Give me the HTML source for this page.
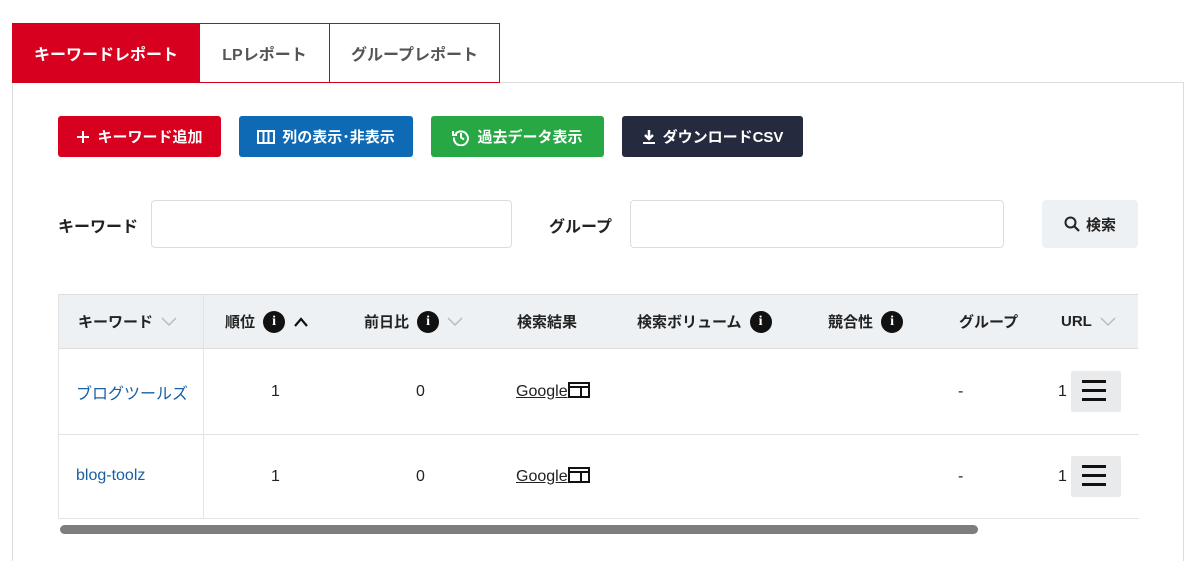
<!DOCTYPE html>
<html><head><meta charset="utf-8"><style>
*{box-sizing:border-box;margin:0;padding:0}
body{width:1200px;height:561px;background:#fff;font-family:"Liberation Sans","Noto Sans CJK JP",sans-serif;position:relative;overflow:hidden;color:#222}
.a{position:absolute}
.tab{position:absolute;top:23px;height:60px;border:1px solid #d0021b;display:flex;align-items:center;justify-content:center;font-size:16px;font-weight:bold;color:#555}
.btn{position:absolute;top:116px;height:41px;border-radius:3px;color:#fff;font-size:15px;font-weight:bold;display:flex;align-items:center;justify-content:center;gap:7px}
.inp{position:absolute;top:200px;height:48px;border:1px solid #dcdcdc;border-radius:4px;background:#fff}
.lbl{position:absolute;top:213px;font-size:16px;font-weight:bold}
.th{position:absolute;top:294px;height:55px;display:flex;align-items:center;font-size:15px;font-weight:bold;gap:8px}
.i{width:22px;height:22px;border-radius:50%;background:#111;color:#fff;font-size:14px;font-weight:bold;display:flex;align-items:center;justify-content:center;font-family:"Liberation Serif",serif}
.td{position:absolute;font-size:16px}
.hb{position:absolute;left:1071px;width:50px;height:41px;background:#e9eaec;border-radius:2px}
.hb i{position:absolute;left:11px;width:24px;height:3px;background:#111}
</style></head><body>
<div class="tab" style="left:12px;width:188px;background:#d7001e;color:#fff">キーワードレポート</div>
<div class="tab" style="left:199px;width:131px">LPレポート</div>
<div class="tab" style="left:329px;width:171px">グループレポート</div>
<div class="a" style="left:500px;top:82px;width:684px;height:1px;background:#ddd"></div>
<div class="a" style="left:12px;top:83px;width:1px;height:478px;background:#ddd"></div>
<div class="a" style="left:1183px;top:83px;width:1px;height:478px;background:#ddd"></div>

<div class="btn" style="left:58px;width:163px;background:#d7001e"><svg width="14" height="14"><path d="M7 1v12M1 7h12" stroke="#fff" stroke-width="2"/></svg>キーワード追加</div>
<div class="btn" style="left:239px;width:174px;background:#0e6ab5"><svg width="18" height="14"><rect x="1" y="1" width="16" height="12" fill="none" stroke="#fff" stroke-width="2"/><path d="M6.5 1v12M11.5 1v12" stroke="#fff" stroke-width="2"/></svg>列の表示･非表示</div>
<div class="btn" style="left:431px;width:173px;background:#27a844"><svg width="18" height="18" viewBox="0 0 18 18"><path d="M3.5 6A7 7 0 1 1 2 9.5" fill="none" stroke="#fff" stroke-width="2"/><path d="M1 3v4h4" fill="none" stroke="#fff" stroke-width="2"/><path d="M9 5v4.5l3 2" fill="none" stroke="#fff" stroke-width="2"/></svg>過去データ表示</div>
<div class="btn" style="left:622px;width:181px;background:#262a3e"><svg width="14" height="16"><path d="M7 1v9M3 6l4 4 4-4" fill="none" stroke="#fff" stroke-width="2.5"/><path d="M1 14h12" stroke="#fff" stroke-width="2"/></svg>ダウンロードCSV</div>

<div class="lbl" style="left:58px">キーワード</div>
<div class="inp" style="left:151px;width:361px"></div>
<div class="lbl" style="left:549px">グループ</div>
<div class="inp" style="left:630px;width:374px"></div>
<div class="a" style="left:1042px;top:200px;width:96px;height:48px;background:#eef1f4;border-radius:4px;display:flex;align-items:center;justify-content:center;gap:6px;font-size:15px;font-weight:bold"><svg width="16" height="16"><circle cx="6.5" cy="6.5" r="5" fill="none" stroke="#222" stroke-width="2"/><path d="M10 10l5 5" stroke="#222" stroke-width="2.2"/></svg>検索</div>

<div class="a" style="left:58px;top:294px;width:1080px;height:55px;background:#edf1f4;border-top:1px solid #ddd;border-bottom:1px solid #ddd"></div>
<div class="a" style="left:58px;top:294px;width:1px;height:225px;background:#e3e3e3"></div>
<div class="a" style="left:203px;top:294px;width:1px;height:225px;background:#e3e3e3"></div>
<div class="a" style="left:58px;top:434px;width:1081px;height:1px;background:#e3e3e3"></div>
<div class="a" style="left:58px;top:518px;width:1081px;height:1px;background:#e3e3e3"></div>

<div class="th" style="left:78px">キーワード<svg width="16" height="10"><path d="M1 1l7 7 7-7" fill="none" stroke="#bbb" stroke-width="1.5"/></svg></div>
<div class="th" style="left:225px">順位<span class="i">i</span><svg width="16" height="10"><path d="M2 9l6-7 6 7" fill="none" stroke="#111" stroke-width="2.2"/></svg></div>
<div class="th" style="left:364px">前日比<span class="i">i</span><svg width="16" height="10"><path d="M1 1l7 7 7-7" fill="none" stroke="#bbb" stroke-width="1.5"/></svg></div>
<div class="th" style="left:517px">検索結果</div>
<div class="th" style="left:637px">検索ボリューム<span class="i">i</span></div>
<div class="th" style="left:828px">競合性<span class="i">i</span></div>
<div class="th" style="left:959px">グループ</div>
<div class="th" style="left:1061px">URL<svg width="16" height="10"><path d="M1 1l7 7 7-7" fill="none" stroke="#bbb" stroke-width="1.5"/></svg></div>

<div class="td" style="left:76px;top:380px;color:#1a5fa5">ブログツールズ</div>
<div class="td" style="left:76px;top:467px;color:#1a5fa5">blog-toolz</div>
<div class="td" style="left:271px;top:383px">1</div><div class="td" style="left:271px;top:468px">1</div>
<div class="td" style="left:416px;top:383px">0</div><div class="td" style="left:416px;top:468px">0</div>
<div class="td" style="left:516px;top:382px;text-decoration:underline">Google<svg width="22" height="16" style="vertical-align:-2px"><rect x="1" y="1" width="20" height="14" fill="none" stroke="#111" stroke-width="2"/><path d="M1 5h20M13 5v10" stroke="#111" stroke-width="2"/></svg></div>
<div class="td" style="left:516px;top:467px;text-decoration:underline">Google<svg width="22" height="16" style="vertical-align:-2px"><rect x="1" y="1" width="20" height="14" fill="none" stroke="#111" stroke-width="2"/><path d="M1 5h20M13 5v10" stroke="#111" stroke-width="2"/></svg></div>
<div class="td" style="left:958px;top:383px">-</div><div class="td" style="left:958px;top:468px">-</div>
<div class="td" style="left:1058px;top:383px">1</div><div class="td" style="left:1058px;top:468px">1</div>
<div class="hb" style="top:371px"><i style="top:9px"></i><i style="top:18px"></i><i style="top:27px"></i></div>
<div class="hb" style="top:456px"><i style="top:9px"></i><i style="top:18px"></i><i style="top:27px"></i></div>

<div class="a" style="left:60px;top:525px;width:918px;height:9px;border-radius:5px;background:#7d7d7d"></div>
</body></html>
